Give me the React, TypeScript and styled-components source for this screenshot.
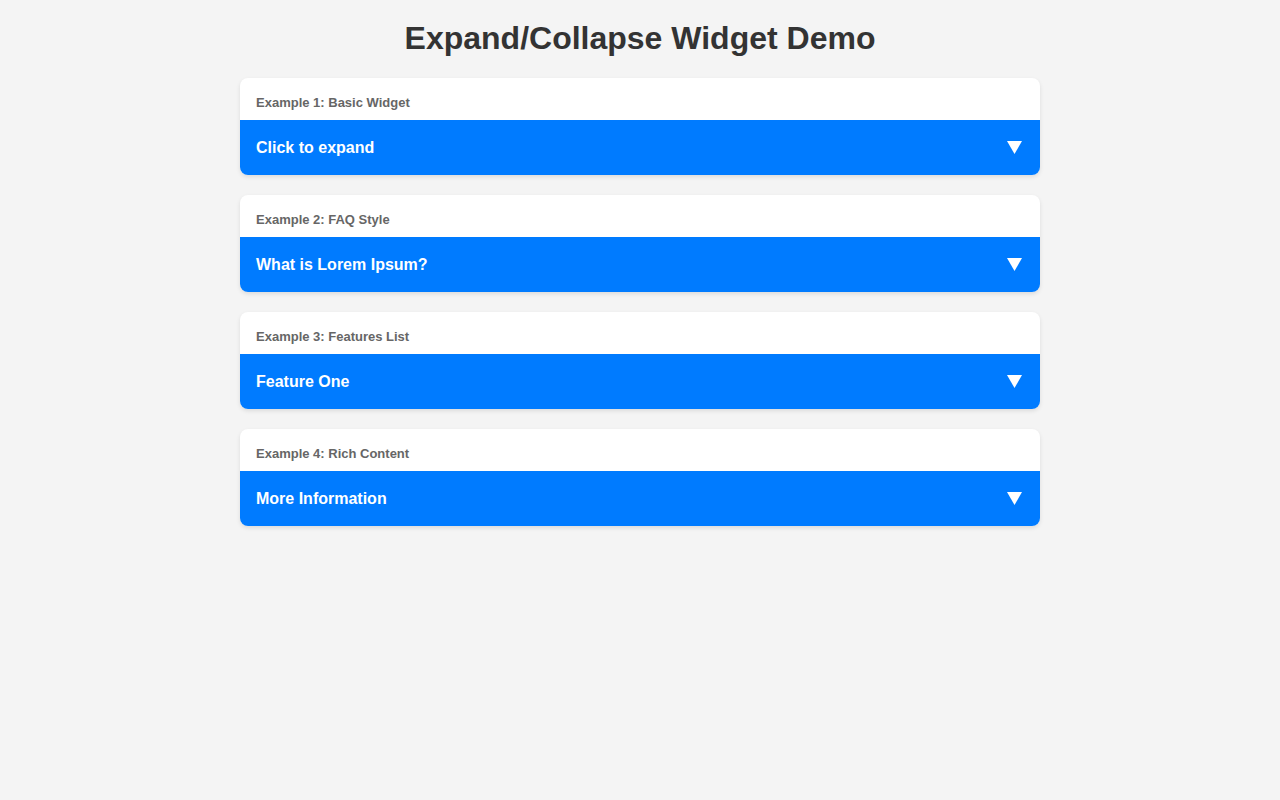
import React, { useState } from 'react'
import styled, { createGlobalStyle } from 'styled-components'

const GlobalStyle = createGlobalStyle`
  html, body {
    margin: 0;
    padding: 0;
    background: #f4f4f4;
    font-family: 'Liberation Sans', Arial, sans-serif;
  }
`

const Page = styled.div`
  max-width: 800px;
  margin: 0 auto;
  padding: 20px 0;
`

const Title = styled.h1`
  margin: 0 0 21px;
  font-size: 32px;
  line-height: 37px;
  font-weight: bold;
  color: #333;
  text-align: center;
`

const List = styled.div`
  display: flex;
  flex-direction: column;
  gap: 20px;
`

const Card = styled.section`
  background: #fff;
  border-radius: 8px;
  overflow: hidden;
  box-shadow: 0 2px 4px rgba(0, 0, 0, 0.1);
`

const Label = styled.div`
  padding: 17px 16px 9px;
  font-size: 13px;
  line-height: 16px;
  font-weight: bold;
  color: #666;
`

const Header = styled.button<{ $open: boolean }>`
  display: flex;
  align-items: center;
  justify-content: space-between;
  width: 100%;
  border: 0;
  margin: 0;
  padding: 18px 18px 18px 16px;
  background: #007bff;
  color: #fff;
  font-family: inherit;
  font-size: 16px;
  line-height: 19px;
  font-weight: bold;
  text-align: left;
  cursor: pointer;
  svg {
    transform: rotate(${(p) => (p.$open ? 180 : 0)}deg);
  }
`

const Body = styled.div`
  padding: 16px;
  font-size: 14px;
  line-height: 20px;
  color: #444;
`

const Arrow = () => (
  <svg width="15" height="13" viewBox="0 0 15 13">
    <polygon points="0,0 15,0 7.5,13" fill="#fff" />
  </svg>
)

const items = [
  { label: 'Example 1: Basic Widget', title: 'Click to expand', body: 'This is the hidden content of a basic widget.' },
  { label: 'Example 2: FAQ Style', title: 'What is Lorem Ipsum?', body: 'Lorem Ipsum is simply dummy text of the printing and typesetting industry.' },
  { label: 'Example 3: Features List', title: 'Feature One', body: 'A short description of the first feature.' },
  { label: 'Example 4: Rich Content', title: 'More Information', body: 'Extra details can go here.' },
]

const Widget = ({ label, title, body }: { label: string; title: string; body: string }) => {
  const [open, setOpen] = useState(false)
  return (
    <Card>
      <Label>{label}</Label>
      <Header $open={open} onClick={() => setOpen(!open)}>
        <span>{title}</span>
        <Arrow />
      </Header>
      {open && <Body>{body}</Body>}
    </Card>
  )
}

const App = () => (
  <>
    <GlobalStyle />
    <Page>
      <Title>Expand/Collapse Widget Demo</Title>
      <List>
        {items.map((it) => (
          <Widget key={it.label} {...it} />
        ))}
      </List>
    </Page>
  </>
)

export default App
